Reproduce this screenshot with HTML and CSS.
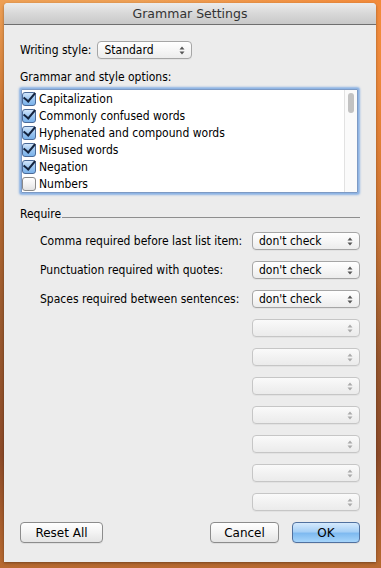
FILE: index.html
```html
<!DOCTYPE html>
<html lang="en">
<head>
    <meta charset="UTF-8">
    <title>Grammar Settings</title>
    <link rel="stylesheet" href="styles.css">
</head>
<body>
    <div class="window">
        <div class="titlebar">Grammar Settings</div>
        <div class="content">
            <div class="style-row">
                <span>Writing style:</span>
                <div class="popup style-popup">Standard<svg class="arrows" width="6" height="9" viewBox="0 0 6 9"><path d="M3 0.5 L5.5 3.5 L0.5 3.5 Z M3 8.5 L5.5 5.5 L0.5 5.5 Z" fill="#555"/></svg></div>
            </div>
            <div class="section-label">Grammar and style options:</div>
            <div class="listbox">
                <div class="rows">
                    <div class="row"><span class="check on"></span>Capitalization</div>
                    <div class="row"><span class="check on"></span>Commonly confused words</div>
                    <div class="row"><span class="check on"></span>Hyphenated and compound words</div>
                    <div class="row"><span class="check on"></span>Misused words</div>
                    <div class="row"><span class="check on"></span>Negation</div>
                    <div class="row"><span class="check"></span>Numbers</div>
                    <div class="row"><span class="check"></span></div>
                </div>
                <div class="scrollbar"><div class="thumb"></div></div>
            </div>
            <div class="group-title"><span>Require</span><div class="rule"></div></div>
            <div class="require">
                <div class="req-row"><span>Comma required before last list item:</span><div class="popup">don't check<svg class="arrows" width="6" height="9" viewBox="0 0 6 9"><path d="M3 0.5 L5.5 3.5 L0.5 3.5 Z M3 8.5 L5.5 5.5 L0.5 5.5 Z" fill="#555"/></svg></div></div>
                <div class="req-row"><span>Punctuation required with quotes:</span><div class="popup">don't check<svg class="arrows" width="6" height="9" viewBox="0 0 6 9"><path d="M3 0.5 L5.5 3.5 L0.5 3.5 Z M3 8.5 L5.5 5.5 L0.5 5.5 Z" fill="#555"/></svg></div></div>
                <div class="req-row"><span>Spaces required between sentences:</span><div class="popup">don't check<svg class="arrows" width="6" height="9" viewBox="0 0 6 9"><path d="M3 0.5 L5.5 3.5 L0.5 3.5 Z M3 8.5 L5.5 5.5 L0.5 5.5 Z" fill="#555"/></svg></div></div>
                <div class="req-row"><div class="popup disabled"><svg class="arrows" width="6" height="9" viewBox="0 0 6 9"><path d="M3 0.5 L5.5 3.5 L0.5 3.5 Z M3 8.5 L5.5 5.5 L0.5 5.5 Z" fill="#aaa"/></svg></div></div>
                <div class="req-row"><div class="popup disabled"><svg class="arrows" width="6" height="9" viewBox="0 0 6 9"><path d="M3 0.5 L5.5 3.5 L0.5 3.5 Z M3 8.5 L5.5 5.5 L0.5 5.5 Z" fill="#aaa"/></svg></div></div>
                <div class="req-row"><div class="popup disabled"><svg class="arrows" width="6" height="9" viewBox="0 0 6 9"><path d="M3 0.5 L5.5 3.5 L0.5 3.5 Z M3 8.5 L5.5 5.5 L0.5 5.5 Z" fill="#aaa"/></svg></div></div>
                <div class="req-row"><div class="popup disabled"><svg class="arrows" width="6" height="9" viewBox="0 0 6 9"><path d="M3 0.5 L5.5 3.5 L0.5 3.5 Z M3 8.5 L5.5 5.5 L0.5 5.5 Z" fill="#aaa"/></svg></div></div>
                <div class="req-row"><div class="popup disabled"><svg class="arrows" width="6" height="9" viewBox="0 0 6 9"><path d="M3 0.5 L5.5 3.5 L0.5 3.5 Z M3 8.5 L5.5 5.5 L0.5 5.5 Z" fill="#aaa"/></svg></div></div>
                <div class="req-row"><div class="popup disabled"><svg class="arrows" width="6" height="9" viewBox="0 0 6 9"><path d="M3 0.5 L5.5 3.5 L0.5 3.5 Z M3 8.5 L5.5 5.5 L0.5 5.5 Z" fill="#aaa"/></svg></div></div>
                <div class="req-row"><div class="popup disabled"><svg class="arrows" width="6" height="9" viewBox="0 0 6 9"><path d="M3 0.5 L5.5 3.5 L0.5 3.5 Z M3 8.5 L5.5 5.5 L0.5 5.5 Z" fill="#aaa"/></svg></div></div>
            </div>
            <div class="buttons">
                <button class="btn reset">Reset All</button>
                <div class="spacer"></div>
                <button class="btn cancel">Cancel</button>
                <button class="btn ok">OK</button>
            </div>
        </div>
    </div>
</body>
</html>
```

FILE: styles.css
```css
html, body {
    margin: 0;
    height: 568px;
    overflow: hidden;
}
body {
    font-family: "DejaVu Sans Condensed", "DejaVu Sans", sans-serif;
    font-stretch: condensed;
    font-size: 12px;
    color: #000;
    background:
        radial-gradient(ellipse at 100% 0%, #f28a3a 0%, rgba(242,138,58,0) 45%),
        linear-gradient(180deg, #eea055 0%, #c9722f 20%, #9a5a2e 55%, #8c4a28 80%, #b86a30 100%);
    padding-top: 3px;
    box-sizing: border-box;
}
.window {
    margin-left: 4px;
    width: 372px;
    height: 559px;
    background-color: #ececec;
    border-radius: 4px 4px 0 0;
    display: flex;
    flex-direction: column;
    box-shadow: 0 1px 3px rgba(0,0,0,0.35);
}
.titlebar {
    height: 21px;
    line-height: 21px;
    text-align: center;
    font-family: "DejaVu Sans", sans-serif;
    font-stretch: normal;
    font-size: 12.5px;
    color: #333;
    background: linear-gradient(180deg, #ececec 0%, #d8d8d8 50%, #c8c8c8 100%);
    border-bottom: 1px solid #6f6f6f;
    border-radius: 4px 4px 0 0;
}
.content {
    flex: 1;
    padding: 16px 16px 0 16px;
    display: flex;
    flex-direction: column;
}
.style-row {
    display: flex;
    align-items: center;
    height: 18px;
    gap: 6px;
}
.popup {
    position: relative;
    height: 16px;
    line-height: 16px;
    border: 1px solid #a6a6a6;
    border-radius: 4px;
    background: linear-gradient(180deg, #ffffff 0%, #f6f6f6 50%, #ececec 100%);
    padding-left: 6px;
    box-sizing: content-box;
    box-shadow: 0 1px 0 rgba(0,0,0,0.04);
}
.popup .arrows {
    position: absolute;
    right: 6px;
    top: 4px;
}
.style-popup {
    width: 87px;
}
.section-label {
    margin-top: 11px;
    line-height: 15px;
}
.listbox {
    margin: 4px 2px 0 1px;
    height: 102px;
    border: 1px solid #7d9ac4;
    box-shadow: 0 0 0 1px #8fb5e4, 0 0 2px 2px rgba(110,160,225,0.75);
    border-radius: 1px;
    background: #fff;
    display: flex;
    overflow: hidden;
}
.rows {
    flex: 1;
}
.row {
    display: flex;
    align-items: center;
    height: 17px;
    gap: 3px;
}
.check {
    width: 12px;
    height: 12px;
    border: 1px solid #8a8a8a;
    border-radius: 3px;
    background: linear-gradient(180deg, #ffffff 0%, #f0f0f0 60%, #e2e2e2 100%);
    position: relative;
}
.check.on {
    border-color: #4a6a98;
    background: linear-gradient(180deg, #d2e6fb 0%, #9cc6f0 50%, #7ab2ea 100%);
}
.check.on::after {
    content: "";
    position: absolute;
    left: 3px;
    top: -3px;
    width: 5px;
    height: 10px;
    border-right: 2.5px solid #14243f;
    border-bottom: 2.5px solid #14243f;
    transform: rotate(40deg);
}
.scrollbar {
    width: 12px;
    border-left: 1px solid #e2e2e2;
    background: #fafafa;
    padding-top: 3px;
    display: flex;
    justify-content: center;
}
.thumb {
    width: 6px;
    height: 20px;
    border-radius: 3px;
    background: #c2c2c2;
}
.group-title {
    margin-top: 14px;
    display: flex;
    align-items: center;
    line-height: 15px;
    gap: 1px;
}
.rule {
    flex: 1;
    height: 1px;
    background: #8e8e8e;
    margin-top: 5px;
}
.require {
    margin-top: 10px;
    display: flex;
    flex-direction: column;
    gap: 11px;
}
.req-row {
    display: flex;
    align-items: center;
    justify-content: space-between;
    padding-left: 20px;
    height: 18px;
}
.req-row .popup {
    width: 100px;
    margin-left: auto;
}
.popup.disabled {
    border-color: #c6c6c6;
    background: linear-gradient(180deg, #fafafa 0%, #f2f2f2 50%, #ebebeb 100%);
}
.buttons {
    margin-top: 11px;
    display: flex;
    align-items: center;
}
.spacer {
    flex: 1;
}
.btn {
    height: 21px;
    font-family: "DejaVu Sans", sans-serif;
    font-stretch: normal;
    font-size: 12px;
    color: #000;
    border: 1px solid #8c8c8c;
    border-radius: 4px;
    background: linear-gradient(180deg, #ffffff 0%, #f3f3f3 50%, #e4e4e4 100%);
    padding: 0;
    box-shadow: 0 1px 0 rgba(0,0,0,0.06);
}
.reset {
    width: 83px;
}
.cancel {
    width: 69px;
}
.ok {
    width: 68px;
    margin-left: 13px;
    border-color: #51719f;
    background: linear-gradient(180deg, #d6eafd 0%, #a7d0f6 45%, #7fbaf0 55%, #a6d5fb 100%);
}
```
